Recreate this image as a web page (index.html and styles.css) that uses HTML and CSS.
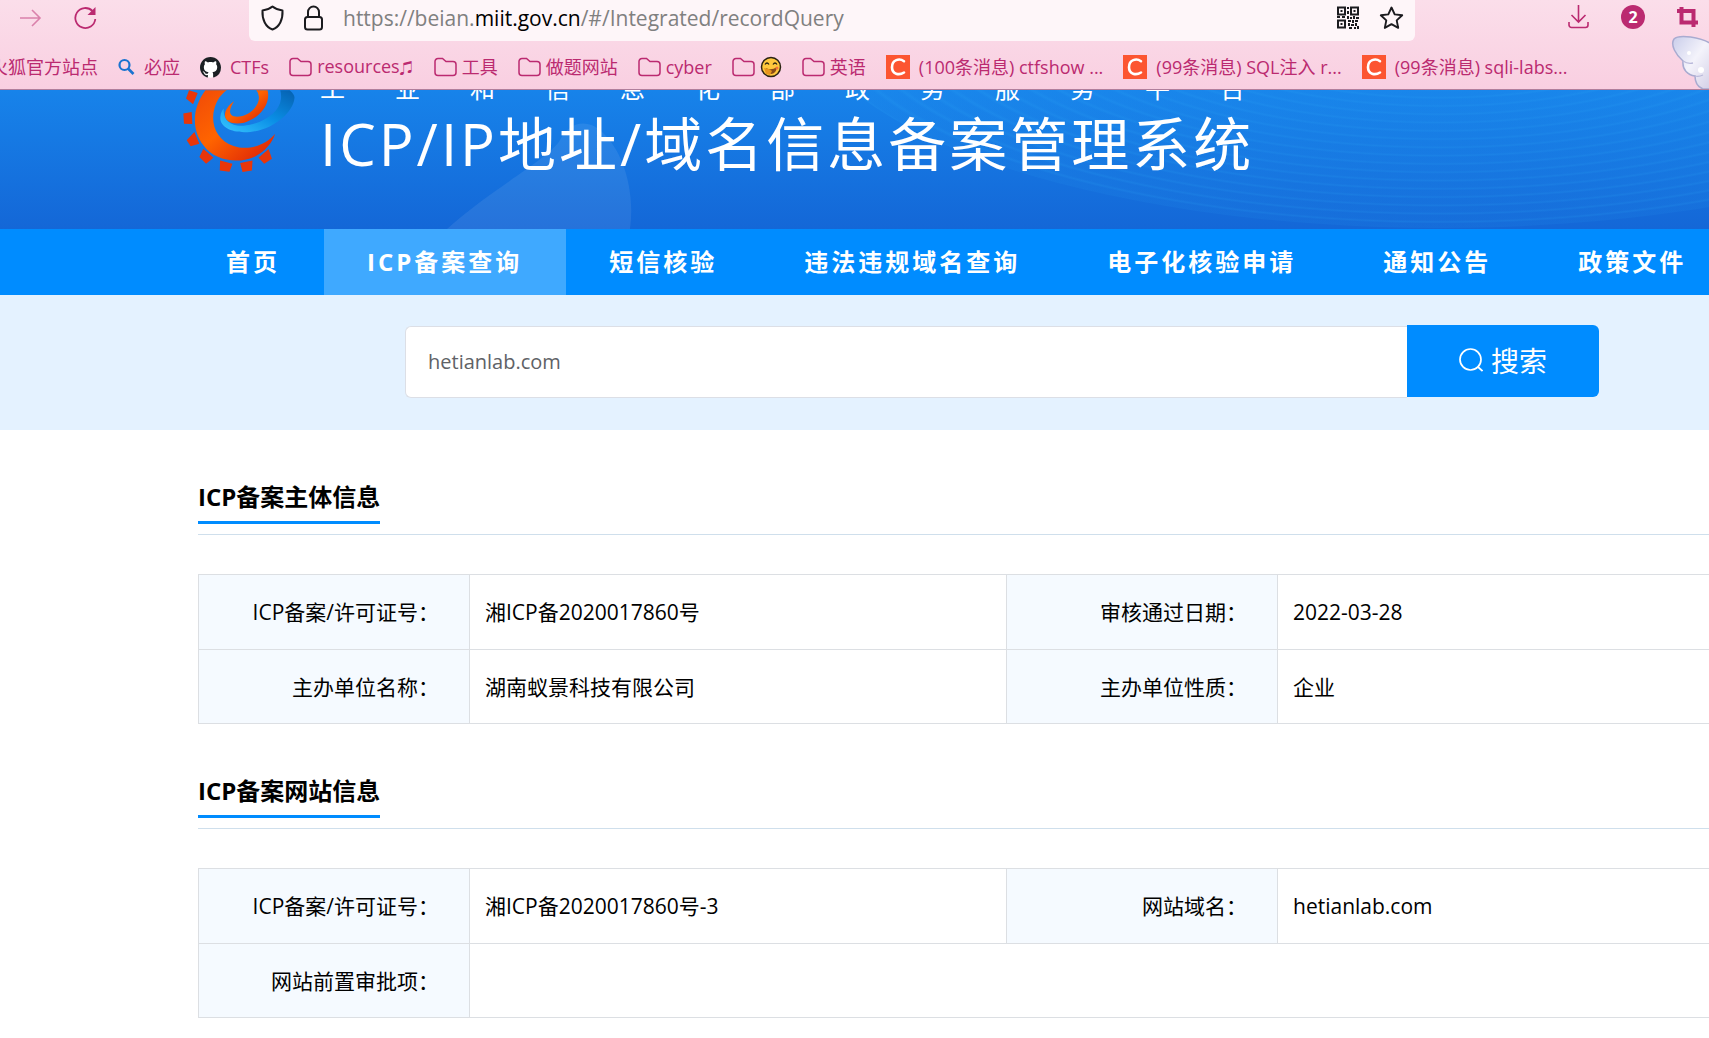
FILE: index.html
```html
<!DOCTYPE html>
<html lang="zh-CN">
<head>
<meta charset="utf-8">
<title>ICP/IP地址/域名信息备案管理系统</title>
<link rel="stylesheet" href="styles.css">
</head>
<body>
<svg class="defs" width="0" height="0" aria-hidden="true">
  <symbol id="folder" viewBox="0 0 23 20"><path d="M1 4.500a3 3 0 0 1 3-3h4.500l3.500 3h7a3 3 0 0 1 3 3v8a3 3 0 0 1-3 3H4a3 3 0 0 1-3-3z" fill="none" stroke="currentColor" stroke-width="1.500"/></symbol>
  <symbol id="csdn" viewBox="0 0 24 24"><path d="M0 0h24v24H0z" fill="#fc5531"/><path d="M18 6.200C13.500 3 6 4.500 6 12.200c0 7 7 8.500 12 5.300" fill="none" stroke="#fff" stroke-width="2.600" stroke-linecap="round"/></symbol>
</svg>

<header class="chrome">
  <div class="toolbar">
    <div class="nav-tools">
      <button class="tool faded" aria-label="前进"><svg width="22" height="20" viewBox="0 0 22 20"><path d="M0 10h20M12 2l8 8-8 8" fill="none" stroke="currentColor" stroke-width="1.600"/></svg></button>
      <button class="tool" aria-label="刷新"><svg width="23" height="24" viewBox="0 0 23 24"><path d="M18.500 5A10 10 0 1 0 21.300 13" fill="none" stroke="currentColor" stroke-width="1.800"/><path d="M21.500 1v8H13.500z" fill="currentColor"/></svg></button>
    </div>
    <div class="urlbar">
      <svg width="23" height="26" viewBox="0 0 23 26"><path d="M11.500 1.500C8.500 4 5 5 1.500 5.500c-.5 9 3 16.500 10 19 7-2.500 10.500-10 10-19C18 5 14.500 4 11.500 1.500z" fill="none" stroke="#1b1b1f" stroke-width="2" stroke-linejoin="round"/></svg>
      <svg width="19" height="26" viewBox="0 0 19 26"><path d="M4 12V7a5.500 5.500 0 0 1 11 0v5" fill="none" stroke="#1b1b1f" stroke-width="2"/><rect x="1" y="12" width="17" height="12.500" rx="2.500" fill="none" stroke="#1b1b1f" stroke-width="2"/></svg>
      <div class="url">https://beian.<b>miit.gov.cn</b>/#/Integrated/recordQuery</div>
      <svg width="22" height="23" viewBox="0 0 22 23"><g fill="none" stroke="#1b1b1f" stroke-width="2"><path d="M1 1.500h7v7H1zM14 1.500h7v7h-7zM1 14.500h7v7H1z"/></g><path fill="#1b1b1f" d="M3.500 4h2v2h-2zM16.500 4h2v2h-2zM3.500 17h2v2h-2zM10 1h2v2h-2zM10 5h2v3h-2zM0 10h3v2H0zM5 10h3v2H5zM10 10h2v3h-2zM13 11h2v2h-2zM16 10h2v3h-2zM19 11h3v2h-3zM11 14h3v2h-3zM15 14h2v3h-2zM18 14h3v2h-3zM11 17h2v3h-2zM14 18h3v2h-3zM18 17h2v3h-2zM12 21h3v2h-3zM17 21h2v2h-2zM20 20h2v3h-2z"/></svg>
      <svg width="25" height="24" viewBox="0 0 25 24"><path d="M12.500 1.500l3.200 6.900 7.500.9-5.500 5.100 1.500 7.500-6.700-3.700-6.700 3.700 1.500-7.500-5.500-5.100 7.500-.9z" fill="none" stroke="#1b1b1f" stroke-width="1.900" stroke-linejoin="round"/></svg>
    </div>
    <div class="right-tools">
      <button class="tool" aria-label="下载"><svg width="21" height="24" viewBox="0 0 21 24"><path d="M10.500 0v17M3.500 10l7 7 7-7M1 17v3a2.500 2.500 0 0 0 2.500 2.500h14A2.500 2.500 0 0 0 20 20v-3" fill="none" stroke="currentColor" stroke-width="1.600"/></svg></button>
      <button class="tool count">2</button>
      <button class="tool" aria-label="截图"><svg width="21" height="22" viewBox="0 0 21 22"><path d="M0 5h16.500v11.500M4.500 1v15.500H21M16.500 15v6" fill="none" stroke="currentColor" stroke-width="4"/></svg></button>
    </div>
  </div>
  <nav class="bookmarks" aria-label="书签">
    <a href="#">火狐官方站点</a>
    <a href="#" class="wide"><svg width="17" height="18" viewBox="0 0 17 18"><circle cx="6.500" cy="7" r="5" fill="none" stroke="#1a73d0" stroke-width="2.200"/><path d="M10 10.500l5.500 5.500" stroke="#1a73d0" stroke-width="2.600"/></svg>必应</a>
    <a href="#" class="wide"><svg width="21" height="21" viewBox="0 0 16 16"><circle cx="8" cy="8" r="7.800" fill="#fff"/><path fill="#1b1f23" d="M8 0C3.580 0 0 3.580 0 8c0 3.540 2.290 6.530 5.470 7.590.4.070.55-.17.55-.38 0-.19-.01-.82-.01-1.490-2.010.37-2.530-.49-2.690-.94-.09-.23-.48-.94-.82-1.130-.28-.15-.68-.52-.01-.53.63-.01 1.080.58 1.230.82.720 1.210 1.870.87 2.330.66.070-.52.280-.87.510-1.070-1.780-.2-3.640-.89-3.640-3.950 0-.87.310-1.590.82-2.150-.08-.2-.36-1.020.08-2.120 0 0 .67-.21 2.200.82.640-.18 1.320-.27 2-.27s1.360.09 2 .27c1.530-1.040 2.200-.82 2.200-.82.440 1.100.160 1.920.080 2.120.510.560.820 1.270.820 2.150 0 3.070-1.870 3.750-3.650 3.950.290.250.540.730.540 1.480 0 1.070-.01 1.930-.01 2.200 0 .21.150.46.550.38A8.010 8.010 0 0 0 16 8c0-4.420-3.580-8-8-8z"/></svg>CTFs</a>
    <a href="#"><svg width="23" height="20"><use href="#folder"/></svg><span>resources<span class="note">♫</span></span></a>
    <a href="#"><svg width="23" height="20"><use href="#folder"/></svg>工具</a>
    <a href="#"><svg width="23" height="20"><use href="#folder"/></svg>做题网站</a>
    <a href="#"><svg width="23" height="20"><use href="#folder"/></svg>cyber</a>
    <a href="#" aria-label="表情"><svg width="23" height="20"><use href="#folder"/></svg><svg width="22" height="22" viewBox="0 0 22 22"><circle cx="11" cy="11" r="9.500" fill="#ffc83d" stroke="#2b2413" stroke-width="1.500"/><path d="M5 8.500q2-3 4 0M13 8.500q2-3 4 0" fill="none" stroke="#2b2413" stroke-width="1.300"/><path d="M6 12q5 3 11-1-1 7-6 7-4-1-5-6z" fill="#8a4d16"/><path d="M4 12l5 1 3 2-2 4-4-1z" fill="#e8961e"/><circle cx="17" cy="12" r="1.500" fill="#f4743b"/></svg></a>
    <a href="#"><svg width="23" height="20"><use href="#folder"/></svg>英语</a>
    <a href="#" class="wide"><svg width="24" height="24"><use href="#csdn"/></svg>(100条消息) ctfshow ...</a>
    <a href="#" class="wide"><svg width="24" height="24"><use href="#csdn"/></svg>(99条消息) SQL注入 r...</a>
    <a href="#" class="wide"><svg width="24" height="24"><use href="#csdn"/></svg>(99条消息) sqli-labs...</a>
  </nav>
  <svg class="wing" width="40" height="54" viewBox="0 0 40 54" aria-hidden="true">
    <defs><linearGradient id="feather" x1="0" y1="0" x2="1" y2="1"><stop offset="0" stop-color="#c9cdea"/><stop offset=".5" stop-color="#f4f3fb"/><stop offset="1" stop-color="#d3cfe6"/></linearGradient></defs>
    <path d="M40 9C30 2 8-1 3 4c-4 6 2 16 9 22-1 9 5 14 12 15 0 6 3 11 8 13h8z" fill="url(#feather)" stroke="#a9abd0" stroke-width="1.500"/>
    <path d="M12 26c3 2 6 3 10 2M24 41c3 1 6 0 8-1" fill="none" stroke="#b9b9da" stroke-width="1.300"/>
    <circle cx="18" cy="18" r="2" fill="#fff"/><circle cx="30" cy="35" r="3" fill="#fff"/>
  </svg>
</header>

<section class="banner">
  <svg class="banner-art" viewBox="0 0 1709 139" preserveAspectRatio="xMinYMin slice" aria-hidden="true">
    <defs>
      <radialGradient id="ripple" gradientUnits="userSpaceOnUse" cx="0" cy="0" r="23" spreadMethod="repeat" gradientTransform="translate(1440 -90) scale(1 .360)">
        <stop offset="0" stop-color="#2ba6f5" stop-opacity=".08"/><stop offset=".6" stop-color="#2ba6f5" stop-opacity=".1"/><stop offset=".8" stop-color="#2ba6f5" stop-opacity=".24"/><stop offset="1" stop-color="#2ba6f5" stop-opacity=".08"/>
      </radialGradient>
    </defs>
    <ellipse cx="1440" cy="-90" rx="640" ry="228" fill="url(#ripple)"/>
    <path d="M447 139C490 100 550 68 560 50c10-20 30-22 45-5 20 20 30 60 25 94z" fill="#fff" opacity=".08"/>
  </svg>
  <svg class="logo" width="117" height="84" viewBox="60 30 350 250" aria-hidden="true">
    <defs>
      <linearGradient id="orange" x1="0" y1="0" x2="1" y2="1"><stop offset="0" stop-color="#f04a08"/><stop offset=".45" stop-color="#ff6400"/><stop offset="1" stop-color="#d91c08"/></linearGradient>
      <linearGradient id="blue" x1="0" y1="1" x2="1" y2="0"><stop offset="0" stop-color="#38c6ff"/><stop offset=".5" stop-color="#0a8fe6"/><stop offset="1" stop-color="#0560b0"/></linearGradient>
    </defs>
    <path fill="url(#blue)" d="M388 30C400 40 404 48 402 56 398 95 340 148 270 155 215 160 176 140 181 108 182 98 186 90 191 85 187 120 215 140 250 136 310 130 358 95 362 56 363 45 362 38 360 30z"/>
    <path fill="url(#orange)" d="M136 30C98 80 92 145 130 195 165 245 240 250 285 228 315 212 335 188 345 160 315 195 265 212 220 197 170 180 150 130 163 85 170 60 182 42 200 30z"/>
    <path fill="url(#orange)" d="M322 30C332 70 300 113 252 127 215 135 190 122 195 98 198 85 210 70 222 63 208 85 202 104 225 109 262 112 298 80 296 50 295 40 292 34 288 30z"/>
    <path fill="#e8360a" d="M87 30l26 8-14 34-21-17zM70 100l25-5 2 36-25-1zM80 180l23-25 15 35-26 8zM130 205l30 27-22 18-20-20zM180 240l37 10-9 24-29-4zM240 248l37-8-2 30-28 5zM295 232l30-26 10 29-23 15z"/>
  </svg>
  <div class="banner-text">
    <p>工业和信息化部政务服务平台</p>
    <h1>ICP/IP地址/域名信息备案管理系统</h1>
  </div>
</section>

<nav class="menu" aria-label="主导航">
  <a href="#">首页</a>
  <a href="#" class="active">ICP备案查询</a>
  <a href="#">短信核验</a>
  <a href="#">违法违规域名查询</a>
  <a href="#">电子化核验申请</a>
  <a href="#">通知公告</a>
  <a href="#">政策文件</a>
</nav>

<form class="search">
  <input type="text" value="hetianlab.com" aria-label="搜索域名">
  <button type="button"><svg width="24" height="24" viewBox="0 0 24 24"><circle cx="11.500" cy="11.500" r="10.500" fill="none" stroke="#fff" stroke-width="1.700"/><path d="M18.500 18.500l5 4.500" stroke="#fff" stroke-width="1.700"/></svg>搜索</button>
</form>

<main class="content">
  <section>
    <div class="heading"><h2>ICP备案主体信息</h2></div>
    <table>
      <colgroup><col class="c-label"><col class="c-value"><col class="c-label"><col></colgroup>
      <tr><th scope="row">ICP备案/许可证号：</th><td>湘ICP备2020017860号</td><th scope="row">审核通过日期：</th><td>2022-03-28</td></tr>
      <tr><th scope="row">主办单位名称：</th><td>湖南蚁景科技有限公司</td><th scope="row">主办单位性质：</th><td>企业</td></tr>
    </table>
  </section>
  <section>
    <div class="heading"><h2>ICP备案网站信息</h2></div>
    <table>
      <colgroup><col class="c-label"><col class="c-value"><col class="c-label"><col></colgroup>
      <tr><th scope="row">ICP备案/许可证号：</th><td>湘ICP备2020017860号-3</td><th scope="row">网站域名：</th><td>hetianlab.com</td></tr>
      <tr><th scope="row">网站前置审批项：</th><td colspan="3"></td></tr>
    </table>
  </section>
</main>
</body>
</html>
```

FILE: styles.css
```css
* { box-sizing: border-box; }

body {
  margin: 0;
  overflow-x: hidden;
  background: #fff;
  color: #000;
  font-family: "Open Sans", "Noto Sans CJK SC", sans-serif;
  font-size: 21px;
}

svg { flex: none; display: block; }
.defs { position: absolute; }
a { color: inherit; text-decoration: none; }
button { font: inherit; border: 0; padding: 0; background: none; color: inherit; }
h1, h2, p { margin: 0; }

/* Browser chrome */
.chrome {
  position: relative;
  height: 90px;
  overflow: hidden;
  background: linear-gradient(#fbdeea, #f9cfe1);
  border-bottom: 1px solid #b07f9c;
  color: #bb2a70;
}
.toolbar { display: flex; height: 41px; }
.nav-tools {
  display: flex;
  gap: 32px;
  width: 249px;
  padding-left: 20px;
  height: 36px;
  align-items: center;
}
.tool { display: flex; align-items: center; justify-content: center; }
.faded { opacity: .5; }
.urlbar {
  flex: 1;
  display: flex;
  align-items: center;
  gap: 20px;
  padding: 0 11px 6px 12px;
  background: #fef6f9;
  border-radius: 0 0 6px 6px;
}
.url { flex: 1; font-size: 21px; line-height: 28px; color: #808080; white-space: nowrap; }
.url b { font-weight: 400; color: #000; }
.right-tools {
  display: flex;
  align-items: center;
  justify-content: space-between;
  width: 294px;
  height: 34px;
  padding: 0 11px 0 153px;
}
.count {
  width: 24px;
  height: 24px;
  border-radius: 12px;
  background: #bb2a70;
  color: #fff;
  font-size: 16px;
  font-weight: 700;
}
.bookmarks {
  display: flex;
  gap: 20px;
  height: 48px;
  padding-top: 4px;
  margin-left: -10px;
  font-size: 18px;
  line-height: 26px;
  white-space: nowrap;
}
.bookmarks a { display: flex; flex: none; align-items: center; gap: 5px; }
.bookmarks .wide { gap: 9px; }
.note { font-size: 14px; }
.wing { position: absolute; right: -2px; bottom: 0; }

/* Banner */
.banner {
  position: relative;
  display: flex;
  gap: 23px;
  height: 139px;
  padding-left: 180px;
  overflow: hidden;
  background: linear-gradient(#1783ea, #1467d7);
  color: #fff;
  white-space: nowrap;
}
.banner-art { position: absolute; left: 0; top: 0; width: 100%; height: 100%; }
.logo, .banner-text { position: relative; }
.banner-text { margin-top: -15px; }
.banner-text p { font-size: 25px; line-height: 26px; letter-spacing: 50px; }
.banner-text h1 { margin-top: 14px; font-size: 58px; line-height: 58px; font-weight: 400; letter-spacing: 3px; }

/* Main menu */
.menu {
  display: flex;
  height: 66px;
  padding-left: 183px;
  overflow: hidden;
  background: #008cff;
  color: #fff;
  font-size: 24px;
  font-weight: 700;
  line-height: 66px;
  letter-spacing: 3px;
  white-space: nowrap;
}
.menu a { flex: none; padding: 0 44px 0 43px; }
.menu .active { background: #3fa9ff; }

/* Search */
.search {
  display: flex;
  padding: 30px 110px 32px 405px;
  background: #e4f2ff;
}
.search input {
  flex: 1;
  height: 72px;
  margin-top: 1px;
  padding: 0 22px 2px;
  border: 1px solid #dcdfe6;
  border-right: 0;
  border-radius: 6px 0 0 6px;
  background: #fff;
  color: #606266;
  font: inherit;
  font-size: 20px;
}
.search button {
  display: flex;
  align-items: center;
  justify-content: center;
  gap: 8px;
  width: 192px;
  height: 72px;
  padding-bottom: 2px;
  border-radius: 0 6px 6px 0;
  background: #008cff;
  color: #fff;
  font-size: 28px;
}

/* Record tables */
.content { padding-left: 198px; }
.heading {
  height: 105px;
  margin-bottom: 39px;
  padding-top: 48px;
  border-bottom: 1px solid #cfdfec;
}
.heading h2 {
  display: inline-block;
  height: 46px;
  border-bottom: 3px solid #008cff;
  font-size: 24px;
  line-height: 37px;
}
table { width: 100%; table-layout: fixed; border-collapse: collapse; }
.c-label { width: 271px; }
.c-value { width: 537px; }
tr { height: 75px; }
tr + tr { height: 74px; }
th, td {
  padding: 0 15px;
  border: 1px solid #dcdfe3;
  border-right: 0;
  line-height: 30px;
}
tr + tr > * { border-top-color: #c9deef; }
th { padding-right: 30px; background: #f5faff; font-weight: 400; text-align: right; white-space: nowrap; }
td { text-align: left; }
```
